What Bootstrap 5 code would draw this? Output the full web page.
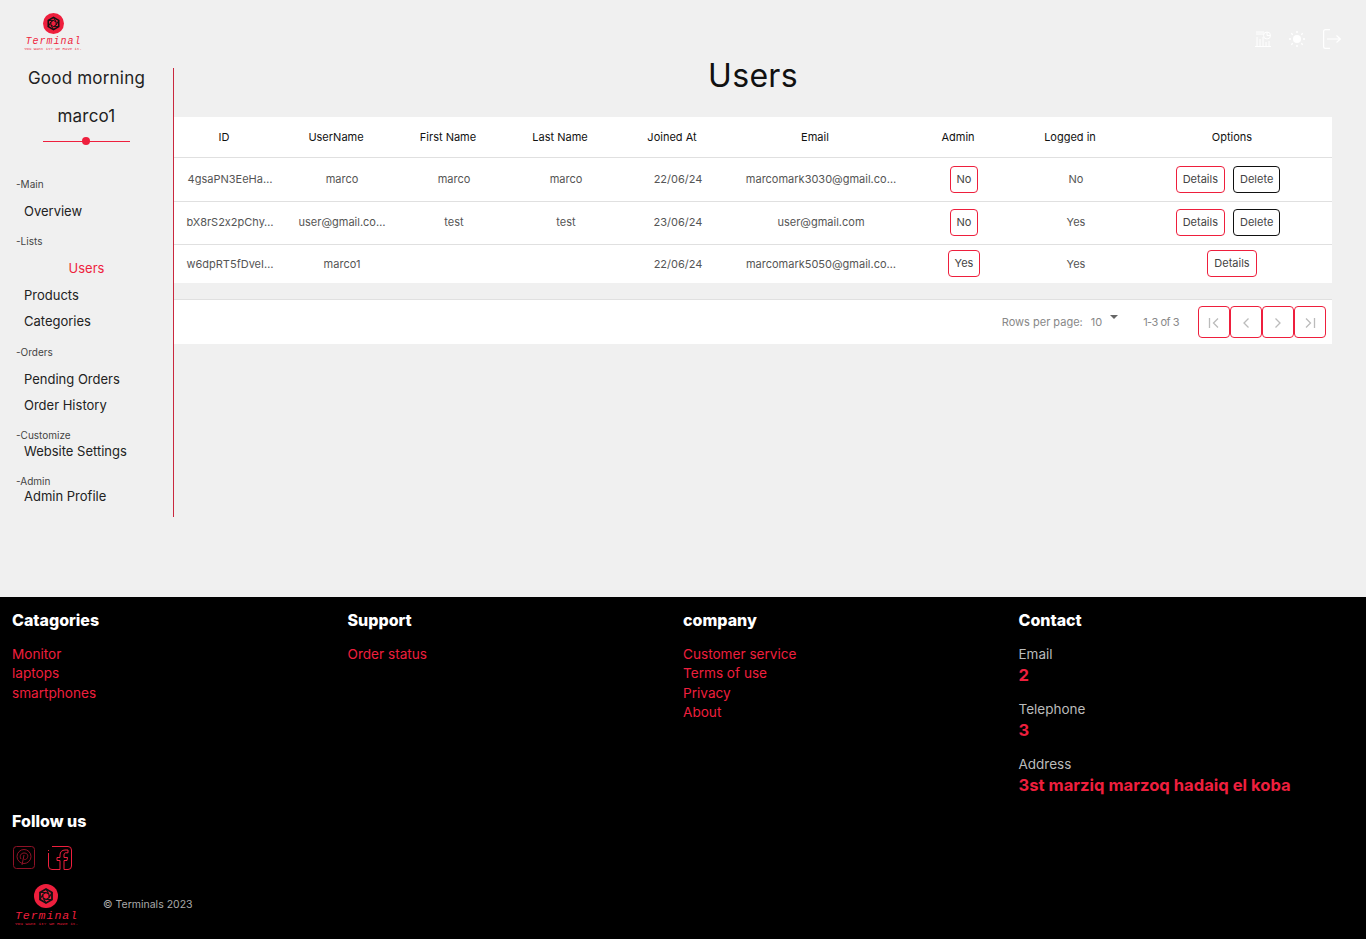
<!DOCTYPE html>
<html lang="en">
<head>
<meta charset="UTF-8" />
<meta name="viewport" content="width=device-width, initial-scale=1.0" />
<title>Users</title>
<link rel="stylesheet" href="https://cdn.jsdelivr.net/npm/bootstrap@5.3.3/dist/css/bootstrap.min.css" />
<script src="https://cdn.jsdelivr.net/npm/bootstrap@5.3.3/dist/js/bootstrap.bundle.min.js"></script>
<style>
  body { background: #f0f0f0; font-family: Inter, "Liberation Sans", sans-serif; font-feature-settings: "calt" 0; color: #222; }
  a { text-decoration: none; }
  .main-area { height: 597px; }

  .side-col { width: 174px; flex: none; }
  .side-logo { height: 68px; padding-left: 23px; padding-top: 13px; }
  .logo-mark { display: block; margin: 0 auto; }
  .logo-box { width: 60px; text-align: center; line-height: 1; }
  .logo-name { font-family: "Liberation Mono", monospace; font-style: italic; font-size: 10px; letter-spacing: 1px; color: #ee1f3d; margin-top: 3px; padding-left: 1px; }
  .logo-tag { font-family: "Liberation Mono", monospace; font-size: 4px; color: #ee1f3d; white-space: nowrap; margin-top: 0; }
  .foot-logo { width: 65px; margin-left: 2px; }
  .foot-logo .logo-mark { position: relative; left: -1px; margin-bottom: -1px; }
  .foot-logo .logo-name { font-size: 11.5px; padding-left: 0; }
  .foot-logo .logo-tag { font-size: 4.4px; margin-top: 1px; }
  .side-nav { height: 449px; border-right: 1px solid #c9283e; }
  .hello { font-size: 17px; line-height: 20px; letter-spacing: .2px; text-align: center; }
  .hello-name { font-size: 17px; line-height: 20px; letter-spacing: .2px; text-align: center; margin-top: 18px; }
  .slide-line { position: relative; height: 1px; width: 87px; background: #ee1f3d; margin: 15px 0 0 43px; }
  .slide-line::after { content: ""; position: absolute; left: 39px; top: -4px; width: 8px; height: 8px; border-radius: 50%; background: #ee1f3d; }
  .nav-head { font-size: 10px; line-height: 12px; color: #444; padding-left: 16px; margin-top: 16px; }
  .nav-item-link { display: block; font-size: 13px; line-height: 16px; padding-left: 24px; color: #222; margin-top: 10px; }
  .nav-item-link.on { padding-left: 0; text-align: center; color: #ee1f3d; }
  .nav-head.first-head { margin-top: 36px; }
  .nav-head.orders-head { margin-top: 17px; }
  .nav-item-link.after-head { margin-top: 13px; }
  .nav-item-link.after-on { margin-top: 11px; }
  .nav-item-link.tight { margin-top: 2px; }
  .nav-item-link.tighter { margin-top: 1px; }

  .content-col { width: 1158px; flex: none; }
  .top-icons { height: 56px; padding-top: 21px; margin-right: -9px; gap: 18px; }
  .page-title { font-size: 32px; line-height: 40px; font-weight: 400; text-align: center; margin: 0 0 21px; color: #111; letter-spacing: .3px; }

  .users-table { table-layout: fixed; width: 1158px; margin: 0; font-size: 11px; background: #fff; }
  .users-table th, .users-table td { text-align: center; padding: 0 6px; vertical-align: middle; border-bottom: 1px solid #e0e0e0; background: #fff; white-space: nowrap; overflow: hidden; }
  .users-table th { height: 40px; font-weight: 400; color: #111; padding-right: 18px; }
  .users-table th.opt-head { padding-right: 6px; }
  .users-table td { color: #555; }
  .users-table tr.r1 td { height: 44px; }
  .users-table tr.r2 td { height: 43px; }
  .users-table tr.r3 td { height: 39px; border-bottom: 0; }
  .small-btn { font-size: 11px; line-height: 15px; padding: 5px 6px; border-radius: 4px; border: 1px solid #ee1f3d; color: #444; background: #fff; }
  .small-btn.dark { border-color: #111; margin: 0 8px; }
  .pager-bar { margin-top: 16px; height: 45px; background: #fff; border-top: 1px solid #e0e0e0; padding-right: 6px; font-size: 11px; color: #888; }
  .pager-count { letter-spacing: -.5px; margin-right: 19px; }
  .pager-size { margin-left: 8px; }
  .pager-caret { width: 0; height: 0; border-left: 4px solid transparent; border-right: 4px solid transparent; border-top: 4px solid #666; margin: -10px 25px 0 8px; }
  .pg-btn { width: 32px; height: 32px; padding: 0; border: 1px solid #ee1f3d; border-radius: 4px; background: #fff; }

  .site-foot { background: #000; height: 342px; padding: 13px 12px 0; color: #ccc; }
  .foot-head { font-size: 16px; line-height: 20px; font-weight: 800; color: #fff; margin: 0 0 14.7px; }
  .foot-link { display: block; color: #ee1f3d; line-height: 19.5px; font-size: 13.6px; }
  .foot-label { line-height: 20px; color: #bbb; font-size: 13.5px; }
  .foot-label.first-label { margin-top: -1px; }
  .foot-val { font-size: 16.6px; line-height: 22px; font-weight: 700; color: #ee1f3d; margin-bottom: 13px; }
  .follow-head { margin-top: 2.3px; margin-bottom: 15px; }
  .social-row { padding-left: 1px; gap: 13px; }
  .foot-bottom { margin-top: 14px; }
  .copy-text { font-size: 10.5px; color: #aaa; margin-left: 24px; margin-bottom: 2px; }
</style>
</head>
<body>
<div class="main-area d-flex">
  <div class="side-col">
    <div class="side-logo">
      <div class="logo-box">
        <svg class="logo-mark" width="21" height="21" viewBox="0 0 24 24"><circle cx="12" cy="12" r="12" fill="#ee1f3d"/><path d="M12 5l6 3.500v7L12 19l-6-3.500v-7z" fill="none" stroke="#111" stroke-width="1.800"/><path d="M12 8.500l3 1.800v3.400l-3 1.800-3-1.800v-3.400zM12 5l3 5.300M18 8.500l-3 5.200M18 15.500h-6M12 19l-3-5.300M6 15.500l3-5.200M6 8.500h6" fill="none" stroke="#111" stroke-width="1.100"/></svg>
        <div class="logo-name">Terminal</div>
        <div class="logo-tag">You Want it? We Have it.</div>
      </div>
    </div>
    <div class="side-nav">
      <div class="hello">Good morning</div>
      <div class="hello-name">marco1</div>
      <div class="slide-line"></div>
      <div class="nav-head first-head">-Main</div>
      <a class="nav-item-link after-head" href="#">Overview</a>
      <div class="nav-head">-Lists</div>
      <a class="nav-item-link on after-head" href="#">Users</a>
      <a class="nav-item-link after-on" href="#">Products</a>
      <a class="nav-item-link" href="#">Categories</a>
      <div class="nav-head orders-head">-Orders</div>
      <a class="nav-item-link after-head" href="#">Pending Orders</a>
      <a class="nav-item-link" href="#">Order History</a>
      <div class="nav-head">-Customize</div>
      <a class="nav-item-link tight" href="#">Website Settings</a>
      <div class="nav-head">-Admin</div>
      <a class="nav-item-link tighter" href="#">Admin Profile</a>
    </div>
  </div>
  <div class="content-col">
    <div class="top-icons d-flex justify-content-end align-items-center">
      <svg width="16" height="16" viewBox="0 0 16 16" fill="none" stroke="#fff" stroke-width="1"><path d="M0 15.500h16M1 1h8M1 3h8M2 6v9M5 8v7M8 6v9M11 11v4M14 10v5"/><circle cx="12" cy="4.500" r="3.500"/><path d="M12 1v3.500h3.500"/></svg>
      <svg width="16" height="16" viewBox="0 0 16 16" fill="#fff" stroke="#fff" stroke-width="1.400"><circle cx="8" cy="8" r="4" stroke="none"/><path d="M8 0v2M8 14v2M0 8h2M14 8h2M2.300 2.300l1.400 1.400M12.300 12.300l1.400 1.400M2.300 13.700l1.400-1.400M12.300 3.700l1.400-1.400"/></svg>
      <svg width="18" height="20" viewBox="0 0 18 20" fill="none" stroke="#fff" stroke-width="1.200"><path d="M7 .6H2.500A1.900 1.900 0 0 0 .6 2.500v15a1.900 1.900 0 0 0 1.900 1.900H7M4 10h13.400M13.500 6.500l3.900 3.500-3.900 3.500"/></svg>
    </div>
    <h1 class="page-title">Users</h1>
    <table class="table users-table">
      <colgroup><col style="width:112px"><col style="width:112px"><col style="width:112px"><col style="width:112px"><col style="width:112px"><col style="width:174px"><col style="width:112px"><col style="width:112px"><col style="width:200px"></colgroup>
      <thead>
        <tr><th>ID</th><th>UserName</th><th>First Name</th><th>Last Name</th><th>Joined At</th><th>Email</th><th>Admin</th><th>Logged in</th><th class="opt-head">Options</th></tr>
      </thead>
      <tbody>
        <tr class="r1"><td>4gsaPN3EeHa…</td><td>marco</td><td>marco</td><td>marco</td><td>22/06/24</td><td>marcomark3030@gmail.co…</td><td><button class="btn small-btn">No</button></td><td>No</td><td><button class="btn small-btn">Details</button><button class="btn small-btn dark">Delete</button></td></tr>
        <tr class="r2"><td>bX8rS2x2pChy…</td><td>user@gmail.co…</td><td>test</td><td>test</td><td>23/06/24</td><td>user@gmail.com</td><td><button class="btn small-btn">No</button></td><td>Yes</td><td><button class="btn small-btn">Details</button><button class="btn small-btn dark">Delete</button></td></tr>
        <tr class="r3"><td>w6dpRT5fDveI…</td><td>marco1</td><td></td><td></td><td>22/06/24</td><td>marcomark5050@gmail.co…</td><td><button class="btn small-btn">Yes</button></td><td>Yes</td><td><button class="btn small-btn">Details</button></td></tr>
      </tbody>
    </table>
    <div class="pager-bar d-flex justify-content-end align-items-center">
      <span>Rows per page:</span>
      <span class="pager-size">10</span>
      <span class="pager-caret"></span>
      <span class="pager-count">1-3 of 3</span>
      <button class="pg-btn" aria-label="first"><svg width="14" height="14" viewBox="0 0 14 14" fill="none" stroke="#bbb" stroke-width="1.300"><path d="M2.500 2v10M11 2.500L6.500 7l4.500 4.500"/></svg></button>
      <button class="pg-btn" aria-label="previous"><svg width="14" height="14" viewBox="0 0 14 14" fill="none" stroke="#bbb" stroke-width="1.300"><path d="M9.500 2.500L5 7l4.500 4.500"/></svg></button>
      <button class="pg-btn" aria-label="next"><svg width="14" height="14" viewBox="0 0 14 14" fill="none" stroke="#bbb" stroke-width="1.300"><path d="M4.500 2.500L9 7l-4.500 4.500"/></svg></button>
      <button class="pg-btn" aria-label="last"><svg width="14" height="14" viewBox="0 0 14 14" fill="none" stroke="#bbb" stroke-width="1.300"><path d="M3 2.500L7.500 7 3 11.500M11.500 2v10"/></svg></button>
    </div>
  </div>
</div>
<footer class="site-foot">
  <div class="row g-0">
    <div class="col-3">
      <h5 class="foot-head">Catagories</h5>
      <a class="foot-link" href="#">Monitor</a>
      <a class="foot-link" href="#">laptops</a>
      <a class="foot-link" href="#">smartphones</a>
    </div>
    <div class="col-3">
      <h5 class="foot-head">Support</h5>
      <a class="foot-link" href="#">Order status</a>
    </div>
    <div class="col-3">
      <h5 class="foot-head">company</h5>
      <a class="foot-link" href="#">Customer service</a>
      <a class="foot-link" href="#">Terms of use</a>
      <a class="foot-link" href="#">Privacy</a>
      <a class="foot-link" href="#">About</a>
    </div>
    <div class="col-3">
      <h5 class="foot-head">Contact</h5>
      <div class="foot-label first-label">Email</div>
      <div class="foot-val">2</div>
      <div class="foot-label">Telephone</div>
      <div class="foot-val">3</div>
      <div class="foot-label">Address</div>
      <div class="foot-val">3st marziq marzoq hadaiq el koba</div>
    </div>
  </div>
  <h5 class="foot-head follow-head">Follow us</h5>
  <div class="social-row d-flex align-items-center">
    <svg width="22" height="23" viewBox="0 0 22 23" fill="none" stroke="#8f1226" stroke-width="1"><rect x=".5" y=".5" width="21" height="22" rx="3"/><circle cx="11" cy="10.500" r="7"/><path d="M8 13c-2-3 0-6 3-6s4.500 2 3.500 4.500-3.500 2.500-4 1M11 9l-2 10"/></svg>
    <svg width="24" height="24" viewBox="0 0 24 24" fill="none" stroke="#ee1f3d" stroke-width="1"><path d="M4 .5h16A3.500 3.500 0 0 1 23.500 4v16a3.500 3.500 0 0 1-3.500 3.500h-4v-9h3l.5-3H16V9c0-1.500.7-2.200 2-2.200h2V4h-3c-3 0-5 2-5 5v2.500H9v3h3v9H4A3.500 3.500 0 0 1 .5 20V7M.5 4v1"/></svg>
  </div>
  <div class="foot-bottom d-flex align-items-center">
    <div class="logo-box foot-logo">
      <svg class="logo-mark" width="24" height="24" viewBox="0 0 24 24"><circle cx="12" cy="12" r="12" fill="#ee1f3d"/><path d="M12 5l6 3.500v7L12 19l-6-3.500v-7z" fill="none" stroke="#111" stroke-width="1.800"/><path d="M12 8.500l3 1.800v3.400l-3 1.800-3-1.800v-3.400zM12 5l3 5.300M18 8.500l-3 5.200M18 15.500h-6M12 19l-3-5.300M6 15.500l3-5.200M6 8.500h6" fill="none" stroke="#111" stroke-width="1.100"/></svg>
      <div class="logo-name">Terminal</div>
      <div class="logo-tag">You Want it? We Have it.</div>
    </div>
    <div class="copy-text">© Terminals 2023</div>
  </div>
</footer>
</body>
</html>
